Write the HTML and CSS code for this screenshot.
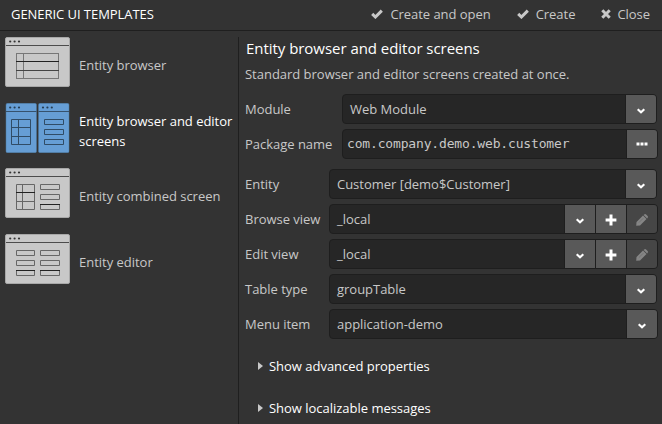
FILE: index.html
```html
<!DOCTYPE html>
<html lang="en">
<head>
<meta charset="utf-8">
<title>Generic UI Templates</title>
<link rel="stylesheet" href="styles.css">
</head>
<body>
<svg class="defs" width="0" height="0">
  <symbol id="check" viewBox="0 0 12 10"><path d="M1.2 4.9 4.4 8 10.8 1.6" fill="none" stroke="currentColor" stroke-width="3"/></symbol>
  <symbol id="cross" viewBox="0 0 10 10"><path d="M1.3 1.3 8.7 8.7M8.7 1.3 1.3 8.7" fill="none" stroke="currentColor" stroke-width="3"/></symbol>
  <symbol id="chevron" viewBox="0 0 10 8"><path d="M1.7 2.2 5 5.3 8.3 2.2" fill="none" stroke="currentColor" stroke-width="2.1"/></symbol>
  <symbol id="plus" viewBox="0 0 12 12"><path d="M6 .6V11.4M.6 6H11.4" fill="none" stroke="currentColor" stroke-width="3"/></symbol>
  <symbol id="dots" viewBox="0 0 12 4"><path d="M.5.5h3v3h-3zM4.5.5h3v3h-3zM8.5.5h3v3h-3z" fill="currentColor"/></symbol>
  <symbol id="pencil" viewBox="0 0 12 12"><path d="M.2 11.8 .5 8 7 1.5 10.5 5 4 11.5zM7.6 .9 8.1.4Q9.2-.4 10.1.4L11.6 1.9Q12.4 2.8 11.6 3.9L11.1 4.4z" fill="currentColor"/><path d="M2.9 8.6 7.2 4.3" stroke="#666" stroke-width=".6"/></symbol>
  <symbol id="window" viewBox="0 0 65 50"><rect x=".5" y=".5" width="64" height="49" rx="1.5" fill="#c8c8c8" stroke="#a8a8a8"/><path d="M1 8.5H64" stroke="#4c4c4c"/><g fill="#333"><circle cx="5.2" cy="4.5" r="1.1"/><circle cx="9.6" cy="4.5" r="1.1"/><circle cx="14" cy="4.5" r="1.1"/></g></symbol>
</svg>
<header class="header">
  <h1 class="title">GENERIC UI TEMPLATES</h1>
  <nav class="actions">
    <a class="action"><svg class="check"><use href="#check"/></svg>Create and open</a>
    <a class="action"><svg class="check"><use href="#check"/></svg>Create</a>
    <a class="action close"><svg class="cross"><use href="#cross"/></svg>Close</a>
  </nav>
</header>
<main class="main">
  <aside class="templates">
    <div class="template">
      <svg class="thumb" viewBox="0 0 65 50"><use href="#window"/>
        <g fill="none"><path d="M11 16.5H54M11 41.5H54M11.5 16V42M18.5 16V42M53.5 16V42" stroke="#777"/><path d="M11 24.5H54" stroke="#222"/><path d="M11 33.5H54" stroke="#444"/></g></svg>
      <span>Entity browser</span>
    </div>
    <div class="template selected">
      <svg class="thumb" viewBox="0 0 65 50">
        <g fill="#669ed5" stroke="#4d789f" stroke-width=".5"><rect x="1" y=".3" width="30.5" height="49.4" rx="1.5"/><rect x="33.5" y=".3" width="30.5" height="49.4" rx="1.5"/></g>
        <path d="M1 8.5H31.5M33.5 8.5H64" stroke="#36526d"/>
        <g fill="#263d52"><circle cx="5.2" cy="4.5" r="1.1"/><circle cx="9.6" cy="4.5" r="1.1"/><circle cx="14" cy="4.5" r="1.1"/><circle cx="38" cy="4.5" r="1.1"/><circle cx="42.4" cy="4.5" r="1.1"/><circle cx="46.8" cy="4.5" r="1.1"/></g>
        <g fill="none" stroke="#304c66"><path d="M6.5 16.5H25.5V41.5H6.5zM13.5 16.5V41.5M6.5 24.5H25.5M6.5 33.5H25.5"/><path d="M39.5 16.5H58.5V21.5H39.5zM39.5 26.5H58.5V31.5H39.5zM39.5 36.5H58.5V41.5H39.5z"/></g></svg>
      <span>Entity browser and editor screens</span>
    </div>
    <div class="template">
      <svg class="thumb" viewBox="0 0 65 50"><use href="#window"/>
        <g fill="none" stroke="#666"><path d="M11.5 16.5H29.5V41.5H11.5zM17.5 16.5V41.5M11.5 33.5H29.5"/><path d="M11 24.5H30" stroke="#222"/><path d="M35.5 16.5H54.5V21.5H35.5zM35.5 26.5H54.5V31.5H35.5zM35.5 36.5H54.5V41.5H35.5z"/><path d="M35 36.5H55" stroke="#222"/></g></svg>
      <span>Entity combined screen</span>
    </div>
    <div class="template">
      <svg class="thumb" viewBox="0 0 65 50"><use href="#window"/>
        <g fill="none" stroke="#666"><path d="M11.5 16.5H29.5V21.5H11.5zM11.5 26.5H29.5V31.5H11.5zM11.5 36.5H29.5V41.5H11.5zM35.5 16.5H54.5V21.5H35.5zM35.5 26.5H54.5V31.5H35.5zM35.5 36.5H54.5V41.5H35.5z"/><path d="M11 36.5H30M35 36.5H55" stroke="#222"/></g></svg>
      <span>Entity editor</span>
    </div>
  </aside>
  <section class="details">
    <h2 class="heading">Entity browser and editor screens</h2>
    <p class="description">Standard browser and editor screens created at once.</p>
    <div class="form wide-labels">
      <label>Module</label>
      <div class="field short"><span class="value">Web Module</span><b class="btn"><svg class="chevron"><use href="#chevron"/></svg></b></div>
      <label>Package name</label>
      <div class="field"><span class="value mono">com.company.demo.web.customer</span><b class="btn"><svg class="dots"><use href="#dots"/></svg></b></div>
    </div>
    <div class="form">
      <label>Entity</label>
      <div class="field short"><span class="value">Customer [demo$Customer]</span><b class="btn"><svg class="chevron"><use href="#chevron"/></svg></b></div>
      <label>Browse view</label>
      <div class="field"><span class="value">_local</span><b class="btn"><svg class="chevron"><use href="#chevron"/></svg></b><b class="btn"><svg class="plus"><use href="#plus"/></svg></b><b class="btn disabled"><svg class="pencil"><use href="#pencil"/></svg></b></div>
      <label>Edit view</label>
      <div class="field"><span class="value">_local</span><b class="btn"><svg class="chevron"><use href="#chevron"/></svg></b><b class="btn"><svg class="plus"><use href="#plus"/></svg></b><b class="btn disabled"><svg class="pencil"><use href="#pencil"/></svg></b></div>
      <label>Table type</label>
      <div class="field short"><span class="value">groupTable</span><b class="btn"><svg class="chevron"><use href="#chevron"/></svg></b></div>
      <label>Menu item</label>
      <div class="field"><span class="value">application-demo</span><b class="btn"><svg class="chevron"><use href="#chevron"/></svg></b></div>
    </div>
    <div class="disclosure"><i class="caret"></i>Show advanced properties</div>
    <div class="disclosure"><i class="caret"></i>Show localizable messages</div>
  </section>
</main>
</body>
</html>
```

FILE: styles.css
```css
* { box-sizing: border-box; }
body {
  margin: 0;
  width: 662px;
  height: 424px;
  overflow: hidden;
  background: #333;
  color: #c8c8c8;
  font: 13px/20px "Open Sans", "Noto Sans", sans-serif;
  letter-spacing: -.02px;
}
svg { display: block; flex: none; }
.defs { position: absolute; }
.header {
  display: flex;
  align-items: center;
  justify-content: space-between;
  height: 31px;
  padding: 0 12px 2px 11px;
  border-bottom: 1px solid #1f1f1f;
}
.title { margin: 0; color: #fff; font-size: 13px; font-weight: 400; letter-spacing: -.05px; }
.actions { display: flex; gap: 26px; }
.action { display: flex; align-items: center; gap: 7px; letter-spacing: -.04px; }
.action.close { gap: 6px; }
.check { width: 12px; height: 10px; }
.cross { width: 10px; height: 10px; }
.main { display: flex; height: 393px; }
.templates { width: 238px; padding: 6px 0 0 5px; }
.template { display: flex; align-items: center; gap: 9px; height: 50px; margin-bottom: 16px; }
.template:nth-child(2) { margin-bottom: 15px; }
.template span { padding-top: 6px; }
.thumb { width: 65px; height: 50px; }
.selected { color: #fff; }
.details { flex: 1; margin-top: 6px; padding: 0 4px 0 6px; border-left: 1px solid #1f1f1f; }
.heading { margin: -1px 0 0 1px; color: #fff; font-size: 15px; font-weight: 400; line-height: 24px; letter-spacing: -.04px; }
.description { margin: 4px 0 10px; }
.form { display: grid; grid-template-columns: 84px 1fr; row-gap: 5px; align-items: center; }
.wide-labels { grid-template-columns: 97px 1fr; margin-bottom: 10px; }
.field {
  display: flex;
  height: 30px;
  border: 1px solid #1e1e1e;
  border-radius: 4px;
  background: #262626;
  overflow: hidden;
}
.field.short { margin-right: 1px; }
.value { flex: 1; padding: 4px 0 0 7px; line-height: 20px; white-space: nowrap; }
.mono { padding: 4px 0 0 4px; font-family: "DejaVu Sans Mono", monospace; letter-spacing: -.16px; }
.btn {
  display: flex;
  align-items: center;
  justify-content: center;
  width: 31px;
  border-left: 1px solid #1e1e1e;
  background: #595959;
  color: #fff;
}
.disabled { background: #464646; color: #858585; }
.chevron { width: 10px; height: 8px; margin-top: 4px; }
.plus { width: 12px; height: 12px; margin-top: 1px; }
.dots { width: 12px; height: 4px; }
.pencil { width: 12px; height: 12px; margin-top: 2px; }
.disclosure { display: flex; align-items: center; gap: 6px; height: 20px; margin: 17px 0 22px 13px; color: #fff; }
.caret { border: solid transparent; border-width: 4px 0 4px 5px; border-left-color: #c8c8c8; }
```
